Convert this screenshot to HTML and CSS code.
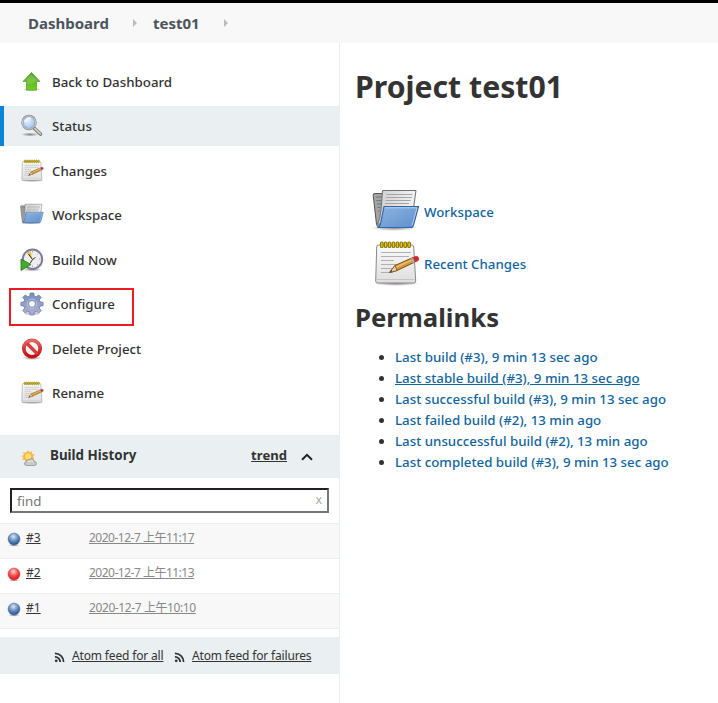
FILE: index.html
```html
<!DOCTYPE html>
<html lang="en">
<head>
<meta charset="utf-8">
<title>test01</title>
<link rel="stylesheet" href="styles.css">
</head>
<body>
<svg class="defs" width="0" height="0" aria-hidden="true">
  <defs>
    <linearGradient id="green" x1="0" y1="0" x2="0" y2="1"><stop offset="0" stop-color="#4a9e24"/><stop offset="1" stop-color="#73d216"/></linearGradient>
    <linearGradient id="folderBlue" x1="0" y1="0" x2="1" y2="1"><stop offset="0" stop-color="#8fb5e0"/><stop offset="1" stop-color="#5c8fcd"/></linearGradient>
    <linearGradient id="paper" x1="0" y1="0" x2="0" y2="1"><stop offset="0" stop-color="#fafafa"/><stop offset="1" stop-color="#dedede"/></linearGradient>
    <linearGradient id="sheet" x1="0" y1="0" x2="1" y2="0"><stop offset="0" stop-color="#cfcfcf"/><stop offset="1" stop-color="#f4f4f4"/></linearGradient>
    <linearGradient id="gearFill" x1="0" y1="0" x2="0" y2="1"><stop offset="0" stop-color="#6f8fbd"/><stop offset="1" stop-color="#b5b0d4"/></linearGradient>
    <linearGradient id="redRing" x1="0" y1="0" x2="0" y2="1"><stop offset="0" stop-color="#e66a6a"/><stop offset="1" stop-color="#cc0808"/></linearGradient>
    <radialGradient id="lens" cx=".4" cy=".35" r=".7"><stop offset="0" stop-color="#eaf3fd"/><stop offset="1" stop-color="#93bbea"/></radialGradient>
    <radialGradient id="blueBall" cx=".45" cy=".3" r=".7"><stop offset="0" stop-color="#dce6ec"/><stop offset=".5" stop-color="#6d91c4"/><stop offset="1" stop-color="#204a87"/></radialGradient>
    <radialGradient id="redBall" cx=".45" cy=".3" r=".7"><stop offset="0" stop-color="#ffd6d6"/><stop offset=".5" stop-color="#f55252"/><stop offset="1" stop-color="#d80f0f"/></radialGradient>
    <radialGradient id="shade"><stop offset="0" stop-color="#000" stop-opacity=".45"/><stop offset="1" stop-color="#000" stop-opacity="0"/></radialGradient>

    <symbol id="notepad" viewBox="0 0 48 48">
      <ellipse cx="24" cy="43.500" rx="23" ry="2.500" fill="url(#shade)"/>
      <path d="M6.500 5h33q2 0 2.200 2l2 34q0 2-2 2h-36q-2 0-2-2l1-34q.2-2 1.800-2z" fill="url(#paper)" stroke="#888a85"/>
      <path d="M4.500 39.500h38" stroke="#c4c4c4"/>
      <path d="M9 12.500h30M9 16.500h28M9 20.500h13M9 24.500h24M9 28.500h12M9 32.500h12" stroke="#b0b0b0" stroke-width="1.100"/>
      <g fill="#e4cd2c" stroke="#8f7902" stroke-width="1.200"><rect x="8.500" y="2" width="2.600" height="5.500" rx="1.300"/><rect x="12.400" y="2" width="2.600" height="5.500" rx="1.300"/><rect x="16.300" y="2" width="2.600" height="5.500" rx="1.300"/><rect x="20.200" y="2" width="2.600" height="5.500" rx="1.300"/><rect x="24.100" y="2" width="2.600" height="5.500" rx="1.300"/><rect x="28" y="2" width="2.600" height="5.500" rx="1.300"/><rect x="31.900" y="2" width="2.600" height="5.500" rx="1.300"/><rect x="35.800" y="2" width="2.600" height="5.500" rx="1.300"/></g>
      <path d="M17.500 32.500l5.500-7L41 17.500l2 4.500L25 30.500z" fill="#d4963c" stroke="#80500d"/>
      <path d="M17.500 32.500l5.500-7 2 5z" fill="#eed5a8" stroke="#765326" stroke-width=".8"/>
      <path d="M17.500 32.500l2-2.500.7 1.300z" fill="#333"/>
      <path d="M24.500 27L40 19.800" stroke="#efc06c" stroke-width="1.400"/>
      <path d="M38.500 18.700l2.800-1.300 2 4.600-2.800 1.300z" fill="#aaa"/>
      <path d="M41.300 17.400q4-2.200 5.200.3t-1.800 3.800l-1.400.5z" fill="#dc2525" stroke="#b12222" stroke-width=".6"/>
    </symbol>
    <symbol id="folder" viewBox="0 0 48 48">
      <ellipse cx="22" cy="40" rx="23" ry="3" fill="url(#shade)"/>
      <path d="M3 5.500q-2-.3-1.800 1.800l3.300 29q.3 2.500 2.500 2.500h8L14 5.500z" fill="#a4a4a4" stroke="#555"/>
      <path d="M4 9h6M4.500 12.500h5M5 16h4.500M5.500 19.500h3M5.800 23h2" stroke="#777" stroke-width="1"/>
      <path d="M10.500 2.500h33.500L41.500 20 34 36H5.500q2.500-4 3.500-14z" fill="url(#sheet)" stroke="#707070"/>
      <path d="M14.500 6.500h26M14 9.500h26M13.500 12.500h25M13 15.500h24" stroke="#a4a4a4" stroke-width="1.100"/>
      <path d="M12 18.500h34.500L41.500 37q-.7 2.500-3 2.500H5.500q2.500-.8 3.300-5z" fill="url(#folderBlue)" stroke="#3465a4" stroke-width="1.200"/>
      <path d="M13 19.800h32l-5 18" fill="none" stroke="#b5cdea"/>
    </symbol>
    <symbol id="up" viewBox="0 0 24 24"><ellipse cx="11.500" cy="19.500" rx="9" ry="2" fill="url(#shade)"/><path d="M11.500 2.500L20 11.500h-3.500V20h-10v-8.500H3z" fill="url(#green)" stroke="#5aa334" stroke-width=".8"/><path d="M11.500 4L5.200 10.700h2.200v3.500q4-.5 8.200-2.500v-1h2.200z" fill="#fff" opacity=".18"/></symbol>
    <symbol id="search" viewBox="0 0 24 24"><ellipse cx="10" cy="20.500" rx="9" ry="2" fill="url(#shade)"/><path d="M14.500 14.500l6 5.500" stroke="#73736f" stroke-width="3.600" stroke-linecap="round"/><path d="M14.800 14.500l5.700 5.300" stroke="#cfcfca" stroke-width="1.800" stroke-linecap="round"/><circle cx="9" cy="8.500" r="6.700" fill="url(#lens)" stroke="#82868c" stroke-width="2"/><circle cx="9" cy="8.500" r="6.600" fill="none" stroke="#d7d9dc" stroke-width=".9"/><path d="M5 8q2-4 6-4" fill="none" stroke="#fff" stroke-width="1.200"/></symbol>
    <symbol id="clock" viewBox="0 0 24 24"><ellipse cx="12" cy="21.500" rx="10" ry="2" fill="url(#shade)"/><circle cx="12.500" cy="11.200" r="9.700" fill="#eeeeec" stroke="#7d7b9b" stroke-width="2"/><path d="M12 11L6.500 5Q8 3.500 11 3.500z" fill="#e5c34b"/><path d="M8.500 6l4 5.500-2.500 4M12.500 11.500l3-2" fill="none" stroke="#30332e" stroke-width="1"/><path d="M12.500 3v1.500M20.500 11H19M12.500 19v-1.500M18 5.500l-.8.800M18 17l-.8-.8" stroke="#aaa"/><path d="M1 11l10 5.500L1 22.500z" fill="#3fae28" stroke="#267515" stroke-width=".8"/></symbol>
    <symbol id="gear" viewBox="0 0 24 24"><ellipse cx="12" cy="21.500" rx="9" ry="2" fill="url(#shade)"/><path fill-rule="evenodd" d="M10.200 1h3.600l.5 3 1.900.8 2.500-1.900 2.500 2.500-1.900 2.500.8 1.900 3 .5v3.400l-3 .5-.8 1.900 1.900 2.500-2.500 2.500-2.500-1.900-1.900.8-.5 3h-3.600l-.5-3-1.900-.8-2.500 1.900-2.500-2.500 1.900-2.500-.8-1.900-3-.5v-3.400l3-.5.8-1.900-1.900-2.500 2.500-2.500 2.500 1.900 1.900-.8zM12 8.500a3.400 3.400 0 1 0 0 6.800 3.400 3.400 0 0 0 0-6.800z" fill="url(#gearFill)" stroke="#64749a" stroke-width=".7"/><circle cx="12" cy="11.900" r="4.700" fill="none" stroke="#c1c9df" stroke-width=".8"/></symbol>
    <symbol id="stop" viewBox="0 0 24 24"><ellipse cx="12" cy="21" rx="10" ry="2" fill="url(#shade)"/><circle cx="12" cy="11.500" r="8.200" fill="#f5f5f5" stroke="#c03030" stroke-width="3.600"/><path d="M6.500 6l11 11" stroke="#c03030" stroke-width="3.200"/><circle cx="12" cy="11.500" r="8.200" fill="none" stroke="url(#redRing)" stroke-width="2.800"/><path d="M6.500 6l11 11" stroke="#df3c3c" stroke-width="2.400"/></symbol>
    <symbol id="weather" viewBox="0 0 16 16"><path d="M7 0l1.200 2.300L11 1l-.3 2.800L14 4.500l-2 2 1.500 2.500L4 12l.1-2L1 10l1.500-2.500L0 6l2.800-1L2 2l2.800.7z" fill="#f8bd62"/><circle cx="7.200" cy="6.500" r="3.800" fill="#ffe06b" stroke="#ed9924" stroke-width=".7"/><path d="M5.500 15.500q-2.300-.2-2-2.200.3-1.500 2-1.500.7-2.600 3-2.300 1.500-1.500 3.300-.4 1.300.5 1.400 2.300 2.300.1 2.300 2.100 0 1.900-2 2z" fill="#c9cac7" stroke="#858784" stroke-width=".7"/><path d="M6 12q2-1.500 3.500-.5Q11 9.500 12.500 12" fill="none" stroke="#eee"/></symbol>
    <symbol id="ballblue" viewBox="0 0 16 16"><ellipse cx="8" cy="14.200" rx="6" ry="1.500" fill="url(#shade)"/><circle cx="8" cy="8" r="6" fill="url(#blueBall)" stroke="#466fa8" stroke-width=".5"/></symbol>
    <symbol id="ballred" viewBox="0 0 16 16"><ellipse cx="8" cy="14.200" rx="6" ry="1.500" fill="url(#shade)"/><circle cx="8" cy="8" r="6" fill="url(#redBall)" stroke="#d83535" stroke-width=".5"/></symbol>
    <symbol id="rss" viewBox="0 0 12 12"><circle cx="2.400" cy="9.600" r="1.500" fill="#333"/><path d="M1 5.200a5.600 5.600 0 0 1 5.700 5.800M1 1.400A9.500 9.500 0 0 1 10.500 11" fill="none" stroke="#333" stroke-width="1.900"/></symbol>
  </defs>
</svg>

<header class="breadcrumbs">
  <a class="crumb first">Dashboard</a><i class="arrow"></i><a class="crumb second">test01</a><i class="arrow"></i>
</header>
<div class="page">
  <aside class="side">
    <nav class="tasks">
      <a class="task"><svg><use href="#up"/></svg><span>Back to Dashboard</span></a>
      <a class="task active"><svg><use href="#search"/></svg><span>Status</span></a>
      <a class="task"><svg><use href="#notepad"/></svg><span>Changes</span></a>
      <a class="task"><svg><use href="#folder"/></svg><span>Workspace</span></a>
      <a class="task"><svg><use href="#clock"/></svg><span>Build Now</span></a>
      <a class="task marked"><svg><use href="#gear"/></svg><span>Configure</span></a>
      <a class="task"><svg><use href="#stop"/></svg><span>Delete Project</span></a>
      <a class="task"><svg><use href="#notepad"/></svg><span>Rename</span></a>
    </nav>
    <section class="history">
      <div class="history-head">
        <svg class="weather"><use href="#weather"/></svg>
        <b class="history-title">Build History</b>
        <a class="trend">trend</a>
        <svg class="chevron" viewBox="0 0 12 8"><path d="M1 6.800L6 1.800l5 5" fill="none" stroke="#222" stroke-width="2"/></svg>
      </div>
      <div class="find"><span>find</span><span class="clear">x</span></div>
      <div class="builds">
        <div class="build"><svg><use href="#ballblue"/></svg><a class="num">#3</a><a class="date">2020-12-7 上午11:17</a></div>
        <div class="build"><svg><use href="#ballred"/></svg><a class="num">#2</a><a class="date">2020-12-7 上午11:13</a></div>
        <div class="build"><svg><use href="#ballblue"/></svg><a class="num">#1</a><a class="date late">2020-12-7 上午10:10</a></div>
      </div>
      <div class="feeds">
        <svg><use href="#rss"/></svg><a class="feed-all"><span>Atom feed for all</span></a>
        <svg><use href="#rss"/></svg><a class="feed-fail"><span>Atom feed for failures</span></a>
      </div>
    </section>
  </aside>
  <main class="main">
    <h1>Project test01</h1>
    <div class="shortcuts">
      <a class="shortcut"><svg><use href="#folder"/></svg><span>Workspace</span></a>
      <a class="shortcut"><svg><use href="#notepad"/></svg><span>Recent Changes</span></a>
    </div>
    <h2>Permalinks</h2>
    <ul class="links">
      <li><a>Last build (#3), 9 min 13 sec ago</a></li>
      <li><a class="hovered">Last stable build (#3), 9 min 13 sec ago</a></li>
      <li><a>Last successful build (#3), 9 min 13 sec ago</a></li>
      <li><a>Last failed build (#2), 13 min ago</a></li>
      <li><a>Last unsuccessful build (#2), 13 min ago</a></li>
      <li><a>Last completed build (#3), 9 min 13 sec ago</a></li>
    </ul>
  </main>
</div>
</body>
</html>
```
FILE: styles.css
```css
*, *::after { box-sizing: border-box; }
body {
  margin: 0;
  height: 703px;
  overflow: hidden;
  display: flex;
  flex-direction: column;
  background: #fff;
  color: #333;
  font-family: "Noto Sans", "Noto Sans CJK SC", sans-serif;
  font-size: 13.3px;
  font-weight: 500;
  white-space: nowrap;
}
svg { flex: none; display: block; }

.breadcrumbs {
  height: 43px;
  flex: none;
  display: flex;
  align-items: center;
  border-top: 3px solid #000;
  background: #f8f8f8;
  padding-left: 28px;
}
.crumb { font-size: 15px; font-weight: 700; color: #4d545d; }
.first { width: 105px; }
.second { width: 71px; margin-left: 16px; }
.arrow { border: 4px solid transparent; border-left-color: #bbb; border-right: 0; }

.page { display: flex; flex: 1; }
.side { width: 340px; flex: none; border-right: 1px solid #eaeff2; padding-top: 19px; }
.tasks { display: flex; flex-direction: column; gap: 4.45px; height: 373px; }
.task {
  height: 40px;
  flex: none;
  display: flex;
  align-items: center;
  gap: 8px;
  padding-left: 20px;
  position: relative;
}
.task svg { width: 24px; height: 24px; }
.active { background: #eaeff2; border-left: 4px solid #0b86d6; padding-left: 16px; }
.marked::after {
  content: "";
  position: absolute;
  left: 9px;
  top: 4px;
  width: 125px;
  height: 38px;
  border: 2px solid #ed1c24;
}

.history-head {
  height: 43px;
  display: flex;
  align-items: center;
  background: #eaeff2;
  padding: 0 26px 3px 21px;
}
.weather { width: 16px; height: 16px; margin-top: 5px; }
.history-title { margin-left: 13px; font-weight: 700; font-size: 13.4px; }
.trend { margin-left: auto; font-weight: 700; font-size: 13.1px; text-decoration: underline; }
.chevron { width: 12px; height: 8px; margin: 4px 0 0 14px; }
.find {
  height: 25px;
  margin: 10px;
  display: flex;
  align-items: center;
  justify-content: space-between;
  border: 2px solid;
  border-color: #202124 #767676 #767676 #202124;
  padding: 0 5px;
  color: #757575;
  font-weight: 400;
}
.clear { color: #aaa; font-size: 12.5px; margin-top: -2px; }
.build {
  height: 35px;
  display: flex;
  align-items: flex-start;
  border-top: 1px solid #eaeff2;
  padding: 5px 0 0 6px;
  font-size: 12px;
  font-weight: 400;
  line-height: 17px;
}
.build:nth-child(odd) { background: #f8f8f8; }
.build svg { width: 16px; height: 16px; margin-top: 2px; }
.build:last-child { height: 36px; border-bottom: 1px solid #eaeff2; }
.num { width: 63px; margin-left: 4px; text-decoration: underline; }
.date { color: #888; text-decoration: underline; letter-spacing: -.5px; }
.late { letter-spacing: -.4px; }
.feeds {
  height: 37px;
  margin-top: 8px;
  display: flex;
  align-items: center;
  background: #eaeff2;
  padding-left: 54px;
  font-size: 12px;
  font-weight: 400;
  letter-spacing: -.16px;
}
.feeds svg { width: 11px; height: 11px; margin: 3px 7px 0 0; }
.feeds span { text-decoration: underline; }
.feed-all { width: 102px; }

.main { padding: 20px 0 0 15px; }
h1, h2 { margin: 0; font-weight: 700; white-space: nowrap; }
h1 { font-size: 30.2px; line-height: 48px; }
h2 { font-size: 25.7px; line-height: 40px; margin-top: 10px; }
.shortcuts { display: flex; flex-direction: column; gap: 4px; padding: 77px 0 0 17px; }
.shortcut { display: flex; align-items: center; gap: 4px; height: 48px; color: #10659e; }
.shortcut svg { width: 48px; height: 48px; }
.links { margin: 9px 0 0; padding-left: 40px; line-height: 21px; }
.links a { color: #10659e; }
.hovered { text-decoration: underline; }
.defs { position: absolute; }
```
